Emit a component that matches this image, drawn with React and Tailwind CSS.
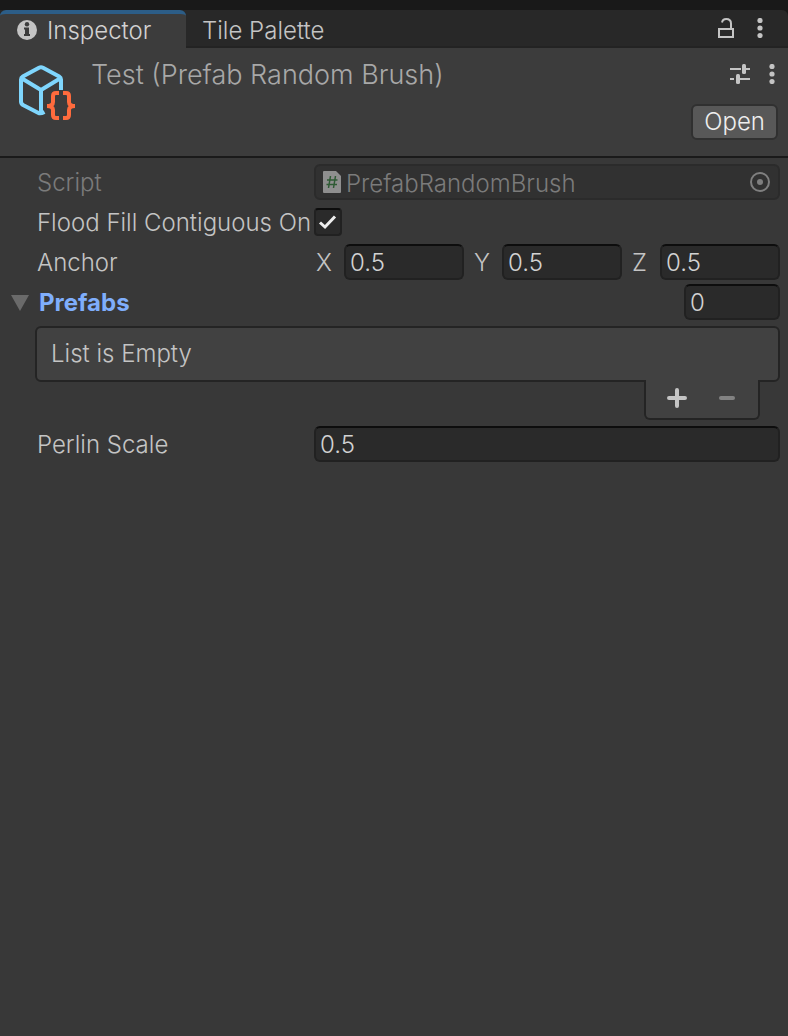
import React, { useState } from 'react';

const fieldStyles =
    'h-9 w-full min-w-0 rounded-md border-2 border-[#212121] border-t-[#0d0d0d] bg-[#2a2a2a] px-1 text-2xl leading-8 text-[#d2d2d2] outline-none focus:border-[#3a79bb]';

const InfoIcon = () => (
    <svg className="w-5 h-5 flex-shrink-0" viewBox="0 0 20 20">
        <circle cx="10" cy="10" r="10" fill="#c4c4c4" />
        <circle cx="10" cy="4.200" r="2.200" fill="#3c3c3c" />
        <path d="M7 7.500H12V14H13V16H7V14H8V9.500H7Z" fill="#3c3c3c" />
    </svg>
);

const LockIcon = () => (
    <svg className="w-4 h-5" viewBox="0 0 16 20" fill="none" stroke="#c4c4c4" strokeWidth="2">
        <rect x="1" y="11" width="14" height="8" />
        <path d="M4 4.500C4.400 2.200 5.900 1 8.200 1C11.200 1 13 2.800 13 5.500V10" />
    </svg>
);

const MoreIcon = () => (
    <svg className="w-[6px] h-5" viewBox="0 0 6 20" fill="#c4c4c4">
        <circle cx="3" cy="2.5" r="2.6" />
        <circle cx="3" cy="10" r="2.6" />
        <circle cx="3" cy="17.500" r="2.6" />
    </svg>
);

const PresetIcon = () => (
    <svg className="w-5 h-5" viewBox="0 0 20 20" fill="#c4c4c4">
        <path d="M0 4H11V6H0ZM16 4H20V6H16ZM0 14H4V16H0ZM9 14H20V16H9Z" />
        <rect x="12" y="0" width="4" height="10" rx="1.5" />
        <rect x="6" y="10" width="4" height="10" rx="1.5" />
    </svg>
);

const PrefabIcon = () => (
    <svg className="w-[56px] h-[56px] flex-shrink-0" viewBox="0 0 56 56" fill="none">
        <g stroke="#7fd6fd" strokeWidth="4" strokeLinejoin="round">
            <path d="M42 25V14.500Q42 12.500 40.200 11.500L24 2.700Q22 1.600 20 2.700L3.800 11.500Q2 12.500 2 14.500V36.500Q2 38.800 4 40L19.500 48Q21.500 49 25.500 47" />
            <path d="M3 13.500L22 25L41 13.500M22 25V48" />
        </g>
        <g stroke="#ff6b3d" strokeWidth="4">
            <path d="M40 28H37Q34 28 34 31V37Q34 41 28 41Q34 41 34 45V50Q34 53 37 53H40" />
            <path d="M44 28H47Q50 28 50 31V37Q50 41 56 41Q50 41 50 45V50Q50 53 47 53H44" />
        </g>
    </svg>
);

const ScriptIcon = () => (
    <svg className="w-[18px] h-[22px] flex-shrink-0" viewBox="0 0 18 22">
        <path d="M1 0H13L18 5V21Q18 22 17 22H1Q0 22 0 21V1Q0 0 1 0Z" fill="#8f8f8f" />
        <path d="M7.500 5L5.500 17M12.500 5L10.500 17M4 9H14.500M3.500 13.500H14" stroke="#2f5b35" strokeWidth="1.500" />
    </svg>
);

const Row = ({ label, htmlFor, disabled, children }) => (
    <div className="flex h-9 items-center">
        <label
            htmlFor={htmlFor}
            className={`mr-1 w-[273px] flex-shrink-0 overflow-hidden pt-[2px] whitespace-nowrap ${disabled ? 'text-[#7b7b7b]' : ''}`}
        >
            {label}
        </label>
        {children}
    </div>
);

const Axis = ({ axis, value, onChange }) => (
    <div className="flex items-center">
        <label htmlFor={`anchor-${axis}`} className="w-[30px] flex-shrink-0 pt-[2px] pl-[2px]">{axis}</label>
        <input
            id={`anchor-${axis}`}
            className={fieldStyles}
            value={value}
            onChange={(e) => onChange(axis, e.target.value)}
        />
    </div>
);

export default function App() {
    const [contiguous, setContiguous] = useState(true);
    const [anchor, setAnchor] = useState({ X: '0.5', Y: '0.5', Z: '0.5' });
    const [count, setCount] = useState('0');
    const [scale, setScale] = useState('0.5');

    const updateAnchor = (axis, value) => setAnchor({ ...anchor, [axis]: value });

    return (
        <div className="min-h-screen bg-[#383838] pb-4 font-['Inter',sans-serif] text-2xl leading-8 font-[350] text-[#c4c4c4]">
            {/* Tabs */}
            <div className="bg-[#191919] pt-[10px]">
                <div className="flex h-[38px] items-stretch rounded-tr-md bg-[#282828]" role="tablist">
                    <button role="tab" aria-selected="true" className="flex w-[186px] items-center gap-[10px] rounded-t-md border-t-4 border-[#2c5d87] bg-[#3c3c3c] pb-[2px] pl-[17px] text-[#d2d2d2]">
                        <InfoIcon />
                        <span className="pt-[2px]">Inspector</span>
                    </button>
                    <div className="flex flex-1 items-center border-b-2 border-[#232323] pr-[25px]">
                        <button role="tab" aria-selected="false" className="flex-1 pt-[6px] pl-4 text-left">Tile Palette</button>
                        <button aria-label="Lock" className="mr-[23px]"><LockIcon /></button>
                        <button aria-label="Tab menu"><MoreIcon /></button>
                    </div>
                </div>
            </div>

            {/* Header */}
            <header className="flex h-[110px] items-start border-b-2 border-[#1a1a1a] bg-[#3c3c3c] pr-[10px] pl-[19px]">
                <div className="pt-[17px]"><PrefabIcon /></div>
                <h1 className="flex-1 pt-[11px] pl-4 text-[27px] font-light text-[#a8a8a8]">Test (Prefab Random Brush)</h1>
                <div className="flex flex-col items-end pt-4">
                    <div className="flex gap-[19px] pr-[3px]">
                        <button aria-label="Presets"><PresetIcon /></button>
                        <button aria-label="Component menu"><MoreIcon /></button>
                    </div>
                    <button className="mt-5 h-9 rounded-md border-2 border-[#303030] bg-[#585858] px-[11px] leading-8 text-[#eeeeee]">
                        Open
                    </button>
                </div>
            </header>

            {/* Properties */}
            <main className="flex flex-col gap-1 pt-[6px] pr-2 pl-[37px]">
                <Row label="Script" htmlFor="script" disabled>
                    <div className="flex h-9 flex-1 items-center rounded-md border-2 border-[#2b2b2b] bg-[#313131] pr-2 pl-[7px]">
                        <ScriptIcon />
                        <input id="script" disabled className="min-w-0 flex-1 pt-[4px] pl-[5px] text-[#7b7b7b]" defaultValue="PrefabRandomBrush" />
                        <button disabled aria-label="Select script">
                            <svg className="w-5 h-5" viewBox="0 0 20 20">
                                <circle cx="10" cy="10" r="9" fill="none" stroke="#7f7f7f" strokeWidth="2" />
                                <circle cx="10" cy="10" r="3" fill="#7f7f7f" />
                            </svg>
                        </button>
                    </div>
                </Row>

                <Row label="Flood Fill Contiguous Only" htmlFor="contiguous">
                    <div className="relative h-7 w-7">
                        <input
                            id="contiguous"
                            type="checkbox"
                            checked={contiguous}
                            onChange={(e) => setContiguous(e.target.checked)}
                            className="peer block h-7 w-7 appearance-none rounded border-2 border-[#212121] border-t-[#0d0d0d] bg-[#2a2a2a]"
                        />
                        <svg className="pointer-events-none absolute inset-0 hidden h-7 w-7 peer-checked:block" viewBox="0 0 28 28" fill="none" stroke="#eeeeee" strokeWidth="3">
                            <path d="M6 14.500L11 19L21 8.500" />
                        </svg>
                    </div>
                </Row>

                <Row label="Anchor" htmlFor="anchor-X">
                    <div className="grid flex-1 grid-cols-3 gap-2">
                        {Object.keys(anchor).map((axis) => (
                            <Axis key={axis} axis={axis} value={anchor[axis]} onChange={updateAnchor} />
                        ))}
                    </div>
                </Row>

                <section>
                    <div className="-ml-[26px] flex h-9 items-center justify-between">
                        <button className="flex items-center gap-[10px] pt-[2px] font-bold text-[#7faefc]">
                            <svg className="w-[18px] h-4" viewBox="0 0 18 16" fill="#6a6a6a">
                                <path d="M0 0H18L9 16Z" />
                            </svg>
                            Prefabs
                        </button>
                        <div className="w-24">
                            <input aria-label="Prefabs size" className={fieldStyles} value={count} onChange={(e) => setCount(e.target.value)} />
                        </div>
                    </div>
                    <div className="mt-[6px] -ml-[2px] rounded-md border-2 border-[#242424] bg-[#414141] px-[14px] py-[10px]">
                        List is Empty
                    </div>
                    <div className="relative -mt-[2px] mr-5 ml-auto flex h-10 w-[116px] items-center justify-between rounded-b-md border-2 border-t-0 border-[#242424] bg-[#414141] px-[21px] pb-[2px]">
                        <button aria-label="Add prefab">
                            <svg className="w-5 h-5" viewBox="0 0 20 20" stroke="#c4c4c4" strokeWidth="4" strokeLinecap="round">
                                <path d="M2 10H18M10 2V18" />
                            </svg>
                        </button>
                        <button aria-label="Remove prefab" className="pr-[2px]">
                            <svg className="w-4 h-5" viewBox="0 0 16 20" stroke="#828282" strokeWidth="4" strokeLinecap="round">
                                <path d="M2 10H14" />
                            </svg>
                        </button>
                    </div>
                </section>

                <div className="pt-[2px]">
                    <Row label="Perlin Scale" htmlFor="scale">
                        <input id="scale" className={fieldStyles} value={scale} onChange={(e) => setScale(e.target.value)} />
                    </Row>
                </div>
            </main>
        </div>
    );
}
